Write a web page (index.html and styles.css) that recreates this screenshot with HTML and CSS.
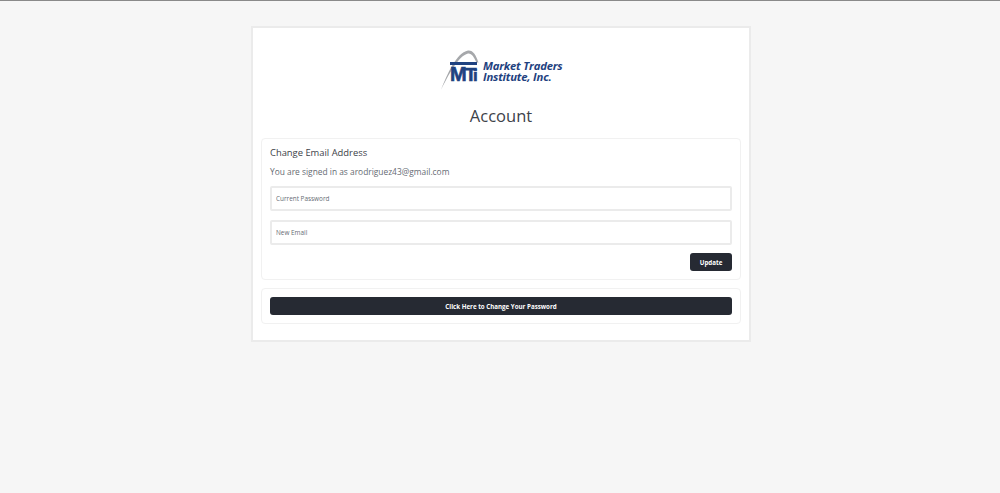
FILE: index.html
```html
<!DOCTYPE html>
<html lang="en">
<head>
<meta charset="utf-8">
<title>Account</title>
<link rel="stylesheet" href="styles.css">
</head>
<body>
<main class="card">
  <div class="logo">
    <svg class="logo-mark" width="42" height="42" viewBox="0 0 42 42" aria-hidden="true">
      <path class="swoosh" d="M1 40 C7 25 16 3 28 .5 C33 0 36 5 38.500 12.500 L36.500 12.500 C34 7 31.500 3 28 3.500 C18 6 8 26 1 40 Z"/>
      <rect class="bar" x="10" y="12" width="27" height="3"/>
      <text class="mark-text" x="10" y="31">M<tspan class="mark-t" x="25">T</tspan><tspan class="mark-i" x="33">i</tspan></text>
    </svg>
    <div class="logo-text"><span>Market Traders</span><span>Institute, Inc.</span></div>
  </div>
  <h1 class="title">Account</h1>
  <section class="panel">
    <h2 class="panel-title">Change Email Address</h2>
    <p class="signed">You are signed in as arodriguez43@gmail.com</p>
    <form class="form">
      <input class="field" type="password" placeholder="Current Password">
      <input class="field" type="email" placeholder="New Email">
      <div class="actions"><button class="btn" type="button">Update</button></div>
    </form>
  </section>
  <section class="panel panel-compact">
    <button class="btn btn-wide" type="button">Click Here to Change Your Password</button>
  </section>
</main>
</body>
</html>
```
FILE: styles.css
```css
* { box-sizing: border-box; }
html, body { height: 100%; }
body {
  margin: 0;
  background: #f6f6f6;
  border-top: 1px solid #8a8a8a;
  font-family: "Open Sans", sans-serif;
  color: #4a4f57;
  overflow: hidden;
}
.card {
  width: 500px;
  height: 316px;
  margin: 25px auto 0 251px;
  padding: 0 8px;
  background: #fff;
  border: 2px solid #ebebeb;
  display: flex;
  flex-direction: column;
}
.logo {
  height: 42px;
  margin-top: 22px;
  display: flex;
  justify-content: flex-start;
  align-items: flex-start;
  padding-left: 179px;
}
.logo-mark { display: block; flex: none; overflow: visible; }
.swoosh { fill: #a6a8ab; }
.bar { fill: #1f4280; }
.mark-text {
  font-family: "Liberation Sans", sans-serif;
  font-weight: 700;
  font-size: 20px;
  fill: #1f4280;
  stroke: #1f4280;
  stroke-width: .6px;
}
.mark-t { font-size: 19px; }
.mark-i { font-size: 17px; }
.logo-text {
  display: flex;
  flex-direction: column;
  margin: 10px 0 0 1px;
  font-size: 11.300px;
  line-height: 11px;
  font-weight: 700;
  font-style: italic;
  color: #1f4280;
  letter-spacing: -0.2px;
}
.title {
  margin: 11px 0 0;
  text-align: center;
  font-size: 16.500px;
  line-height: 26px;
  font-weight: 400;
  color: #3d4249;
}
.panel {
  margin-top: 9px;
  height: 142px;
  border: 1px solid #f1f1f1;
  border-radius: 4px;
  padding: 7px 8px 0;
}
.panel-compact {
  margin-top: 8px;
  height: 36px;
  padding-top: 8px;
}
.panel-title {
  margin: 0;
  font-size: 9.400px;
  line-height: 13px;
  font-weight: 400;
  color: #3d4249;
}
.signed {
  margin: 6px 0 0;
  font-size: 8.400px;
  line-height: 14px;
  color: #666b73;
}
.form {
  margin-top: 7px;
  display: flex;
  flex-direction: column;
  gap: 9px;
}
.field {
  width: 100%;
  height: 25px;
  padding: 0 4px;
  background: #fff;
  border: 2px solid #ebebeb;
  border-radius: 2px;
  font-family: inherit;
  font-size: 6.400px;
  outline: none;
}
.field::placeholder { color: #666b73; opacity: 1; }
.actions { display: flex; justify-content: flex-end; margin-top: -1px; }
.btn {
  height: 18px;
  width: 42px;
  padding: 0;
  background: #262a33;
  border: 0;
  border-radius: 3px;
  font-family: inherit;
  font-size: 6.200px;
  font-weight: 700;
  color: #fff;
}
.btn-wide { width: 100%; display: block; }
```
